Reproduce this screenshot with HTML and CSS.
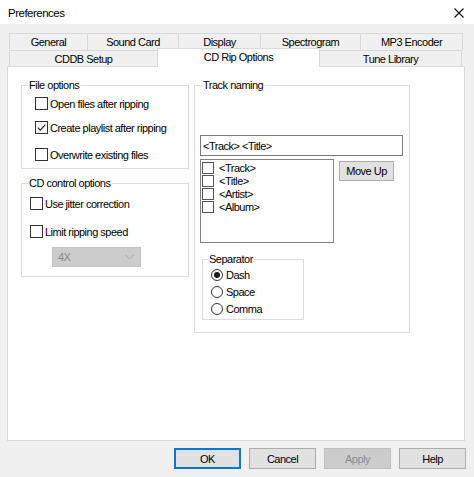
FILE: index.html
```html
<!DOCTYPE html>
<html>
<head>
<meta charset="utf-8">
<title>Preferences</title>
<link rel="stylesheet" href="styles.css">
</head>
<body>
<div class="window">
  <div class="titlebar">
    <span class="title">Preferences</span>
    <svg class="close" width="10" height="10" viewBox="0 0 10 10"><path d="M0.5 0.5 L9.5 9.5 M9.5 0.5 L0.5 9.5" stroke="#111" stroke-width="1.1" fill="none"/></svg>
  </div>

  <div class="tabs">
    <div class="tabrow row1">
      <div class="tab t-general">General</div>
      <div class="tab t-sound">Sound Card</div>
      <div class="tab t-display">Display</div>
      <div class="tab t-spectro">Spectrogram</div>
      <div class="tab t-mp3">MP3 Encoder</div>
    </div>
    <div class="tabrow row2">
      <div class="tab t-cddb">CDDB Setup</div>
      <div class="tab t-rip selected">CD Rip Options</div>
      <div class="tab t-tune">Tune Library</div>
    </div>
  </div>

  <div class="panel">
    <div class="col-left">
      <div class="group g-file">
        <div class="legend">File options</div>
        <div class="chk-row r1"><span class="cb"></span><span>Open files after ripping</span></div>
        <div class="chk-row r2"><span class="cb"><svg width="11" height="11" viewBox="0 0 11 11"><path d="M1.8 5.6 L4.3 8.1 L9.3 2.6" stroke="#222" stroke-width="1.2" fill="none"/></svg></span><span>Create playlist after ripping</span></div>
        <div class="chk-row r3"><span class="cb"></span><span>Overwrite existing files</span></div>
      </div>
      <div class="group g-cd">
        <div class="legend">CD control options</div>
        <div class="chk-row c1"><span class="cb"></span><span>Use jitter correction</span></div>
        <div class="chk-row c2"><span class="cb"></span><span>Limit ripping speed</span></div>
        <div class="combo"><span>4X</span><svg width="9" height="6" viewBox="0 0 9 6"><path d="M0.5 1 L4.5 5 L8.5 1" stroke="#a8a8a8" stroke-width="1" fill="none"/></svg></div>
      </div>
    </div>

    <div class="group g-track">
      <div class="legend lg-track">Track naming</div>
      <div class="textbox">&lt;Track&gt; &lt;Title&gt;</div>
      <div class="list-row">
        <div class="listbox">
          <div class="item"><span class="icb"></span><span>&lt;Track&gt;</span></div>
          <div class="item"><span class="icb"></span><span>&lt;Title&gt;</span></div>
          <div class="item"><span class="icb"></span><span>&lt;Artist&gt;</span></div>
          <div class="item"><span class="icb"></span><span>&lt;Album&gt;</span></div>
        </div>
        <div class="btn moveup">Move Up</div>
      </div>
      <div class="group g-sep">
        <div class="legend">Separator</div>
        <div class="radio-row"><span class="rb on"><span class="dot"></span></span><span>Dash</span></div>
        <div class="radio-row"><span class="rb"></span><span>Space</span></div>
        <div class="radio-row"><span class="rb"></span><span>Comma</span></div>
      </div>
    </div>
  </div>

  <div class="buttons">
    <div class="btn dlg default">OK</div>
    <div class="btn dlg">Cancel</div>
    <div class="btn dlg disabled">Apply</div>
    <div class="btn dlg">Help</div>
  </div>
</div>
</body>
</html>
```

FILE: styles.css
```css
* { box-sizing: border-box; }

html, body {
  margin: 0;
  padding: 0;
}

body {
  width: 474px;
  height: 477px;
  background: #f0f0f0;
  font-family: "Liberation Sans", Arial, sans-serif;
  font-size: 11px;
  letter-spacing: -0.5px;
  color: #000;
  overflow: hidden;
}

.window {
  width: 474px;
  height: 477px;
  display: flex;
  flex-direction: column;
}

.titlebar {
  height: 24px;
  background: #ffffff;
  display: flex;
  align-items: center;
  justify-content: space-between;
  padding: 0 10px 0 8px;
}

.title {
  font-size: 11.5px;
  padding-top: 1px;
}

.close {
  display: block;
  margin-top: 2px;
}

/* Tabs */
.tabs {
  margin: 9px 0 0 9px;
  width: 454px;
}

.tabrow {
  display: flex;
}

.tab {
  border-top: 1px solid #d9d9d9;
  border-left: 1px solid #d9d9d9;
  background: #f0f0f0;
  display: flex;
  align-items: center;
  justify-content: center;
  white-space: nowrap;
}

.tabrow .tab:last-child {
  border-right: 1px solid #d9d9d9;
}

.row1 .tab { height: 17px; }
.row2 .tab { height: 16px; padding-top: 1px; }

.t-general { width: 78px; }
.t-sound { width: 91px; }
.t-display { width: 82px; }
.t-spectro { width: 100px; }
.t-mp3 { width: 103px; }
.t-cddb { width: 148px; }
.t-rip { width: 163px; }
.t-tune { width: 143px; }

.tab.selected {
  background: #ffffff;
  margin-top: -2px;
  height: 19px;
  margin-bottom: -1px;
  border-right: 1px solid #d9d9d9;
  margin-right: -1px;
  position: relative;
  z-index: 1;
  align-items: flex-start;
  padding-top: 2px;
}

/* Panel */
.panel {
  margin-left: 7px;
  width: 458px;
  height: 375px;
  background: #ffffff;
  border: 1px solid #d9d9d9;
  padding: 18px 0 0 13px;
  display: flex;
  align-items: flex-start;
}

.col-left {
  width: 168px;
  display: flex;
  flex-direction: column;
}

.group {
  border: 1px solid #dcdcdc;
  background: #ffffff;
}

.legend {
  margin-top: -8px;
  margin-left: 6px;
  padding: 0 1px;
  line-height: 14px;
  height: 14px;
  background: #ffffff;
  width: fit-content;
  white-space: nowrap;
}

.chk-row {
  display: flex;
  align-items: center;
  height: 13px;
  gap: 2px;
  white-space: nowrap;
}

.cb {
  width: 13px;
  height: 13px;
  border: 1px solid #333333;
  background: #ffffff;
  flex: none;
  display: flex;
  align-items: center;
  justify-content: center;
}

.cb svg { display: block; }

.g-file {
  padding: 0 0 7px 13px;
}
.g-file .legend { margin-left: -7px; }
.g-file .r1 { margin-top: 5px; }
.g-file .r2 { margin-top: 11px; }
.g-file .r3 { margin-top: 14px; }

.g-cd {
  margin-top: 14px;
  padding: 0 0 9px 8px;
}
.g-cd .legend { margin-left: -2px; }
.g-cd .c1 { margin-top: 7px; }
.g-cd .c2 { margin-top: 15px; }

.combo {
  margin: 9px 0 0 22px;
  width: 89px;
  height: 20px;
  background: #cccccc;
  border: 1px solid #c2c2c2;
  color: #8a8a8a;
  display: flex;
  align-items: center;
  justify-content: space-between;
  padding: 0 6px 0 5px;
}

.combo svg { display: block; }

/* Track naming */
.g-track {
  margin-left: 5px;
  width: 216px;
  height: 248px;
  padding: 0 0 0 5px;
}
.g-track .lg-track { margin-left: 2px; }

.textbox {
  margin-top: 43px;
  width: 203px;
  height: 21px;
  border: 1px solid #7a7a7a;
  padding-left: 2px;
  display: flex;
  align-items: center;
  white-space: nowrap;
}

.list-row {
  display: flex;
  align-items: flex-start;
  margin-top: 3px;
}

.listbox {
  width: 134px;
  height: 84px;
  border: 1px solid #828282;
  padding: 1px 0 0 1px;
}

.item {
  height: 13px;
  display: flex;
  align-items: center;
  gap: 5px;
}

.icb {
  width: 12px;
  height: 12px;
  border: 1px solid #555555;
  flex: none;
}

.btn {
  background: #e1e1e1;
  border: 1px solid #adadad;
  display: flex;
  align-items: center;
  justify-content: center;
  white-space: nowrap;
}

.moveup {
  margin: 2px 0 0 5px;
  width: 55px;
  height: 20px;
}

.g-sep {
  margin: 16px 0 0 2px;
  width: 102px;
  padding: 0 0 2px 8px;
}
.g-sep .legend { margin-left: -3px; }

.radio-row {
  height: 17px;
  display: flex;
  align-items: center;
  gap: 3px;
}

.rb {
  width: 12px;
  height: 12px;
  border: 1px solid #333333;
  border-radius: 50%;
  background: #ffffff;
  flex: none;
  display: flex;
  align-items: center;
  justify-content: center;
}

.rb .dot {
  width: 6px;
  height: 6px;
  border-radius: 50%;
  background: #1a1a1a;
}

/* Bottom buttons */
.buttons {
  display: flex;
  justify-content: flex-end;
  gap: 8px;
  margin-top: 7px;
  padding-right: 8px;
}

.dlg {
  width: 67px;
  height: 21px;
}

.dlg.default {
  border: 1px solid #0078d7;
  box-shadow: inset 0 0 0 1px #0078d7;
}

.dlg.disabled {
  background: #cccccc;
  border-color: #bfbfbf;
  color: #8d8d8d;
}
```
